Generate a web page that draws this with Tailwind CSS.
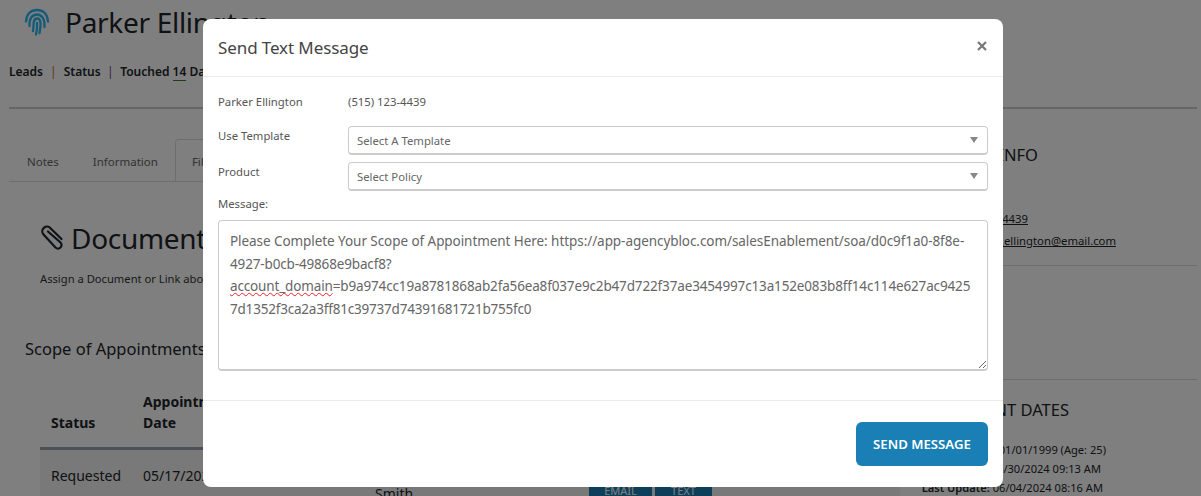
<!DOCTYPE html>
<html lang="en">
<head>
  <meta charset="UTF-8" />
  <meta name="viewport" content="width=device-width, initial-scale=1" />
  <title>Send Text Message</title>
  <script src="https://cdn.jsdelivr.net/npm/@tailwindcss/browser@4"></script>
</head>
<body class="relative h-[496px] overflow-hidden bg-white font-['Noto_Sans',sans-serif] text-[#212529]">
  <!-- Page behind the modal -->
  <div class="pl-[9px] pr-[4px]">
    <header class="h-[107px]">
      <div class="flex items-center gap-[15px] pl-[15px] pt-[4px]">
        <svg class="h-[28px] w-[26px] text-[#28b8f0]" viewBox="0 0 26 28" fill="none" stroke="currentColor" stroke-width="2.300" stroke-linecap="round">
          <path d="M2 13.500C2.500 6 7 2 13 2s10.500 4 11 11.500" />
          <path d="M5.500 18C5 11 8 6.500 13 6.500S21 11 20.500 19" />
          <path d="M9 23C10 17 8.500 10.500 13 10.500S17 17 15.500 25" />
          <path d="M13 15c.3 4 0 8-1 11.500" />
        </svg>
        <h1 class="text-[28px] leading-[36px] tracking-[-0.3px]">Parker Ellington</h1>
      </div>
      <div class="mt-[23px] flex items-center text-[12px] font-semibold leading-[18px]">
        <span>Leads</span>
        <span class="mx-[7px] font-normal text-[#c86a30]">|</span>
        <span>Status</span>
        <span class="mx-[6.500px] font-normal text-[#7a3a8a]">|</span>
        <span>Touched <span class="border-b border-[#3a7a3a]">14</span> Days Ago</span>
      </div>
    </header>
    <div class="h-[2px] bg-[#ccc]"></div>

    <div class="grid grid-cols-[900px_1fr] pt-[31px]">
      <main>
        <nav class="flex h-[42px] items-end border-b border-[#ddd] text-[11.500px] text-[#666]">
          <a class="flex h-[41px] items-center pl-[18px] pr-[16px] pt-[3px]">Notes</a>
          <a class="flex h-[41px] items-center pl-[18px] pr-[17px] pt-[3px]">Information</a>
          <a class="flex h-[42px] items-center rounded-t border border-b-0 border-[#ddd] bg-white px-[16px] pt-[3px]">Files</a>
        </nav>
        <div class="flex items-center gap-[7px] pl-[31px] pt-[38px]">
          <svg class="h-[27px] w-[24px]" viewBox="0 0 24 27" fill="none" stroke="currentColor" stroke-width="2.200" stroke-linecap="round" stroke-linejoin="round">
            <path d="M21.500 14 10.500 3.200A4.700 4.700 0 0 0 3.500 9.500L15.500 22.500a3.500 3.500 0 0 0 5-5L8 6.500" />
          </svg>
          <h2 class="text-[28px] leading-[36px] tracking-[-0.3px]">Documents</h2>
        </div>
        <p class="pl-[31px] pt-[15px] text-[11.200px] leading-[16px] text-[#333]">Assign a Document or Link about this lead</p>
        <h3 class="pl-[16px] pt-[50px] text-[16.500px] leading-[24px]">Scope of Appointments</h3>
        <table class="ml-[31px] mt-[25px] w-[860px] table-fixed border-collapse text-left text-[14px]">
          <thead>
            <tr class="h-[62px] border-b-[3px] border-[#9aa5b1] align-bottom font-semibold">
              <th class="w-[91px] pb-[14px] pl-[11px] pr-[12px]">Status</th>
              <th class="w-[232px] px-[12px] pb-[14px]">Appointment<br />Date</th>
              <th class="w-[214px] px-[12px] pb-[14px]">Agent</th>
              <th class="px-[12px] pb-[14px]">Actions</th>
            </tr>
          </thead>
          <tbody>
            <tr class="h-[60px] bg-[#f2f2f2] align-top">
              <td class="pl-[11px] pr-[12px] pt-[15px]">Requested</td>
              <td class="px-[12px] pt-[15px]">05/17/2024</td>
              <td class="px-[12px] pt-[33px]">Smith</td>
              <td class="px-[12px] pt-[27px]">
                <div class="flex gap-[3px] text-[11px] text-white">
                  <span class="flex h-[30px] w-[63px] items-center justify-center bg-[#1a7fb5]">EMAIL</span>
                  <span class="flex h-[30px] w-[57px] items-center justify-center bg-[#1a7fb5]">TEXT</span>
                </div>
              </td>
            </tr>
          </tbody>
        </table>
      </main>
      <aside class="text-[11.300px]">
        <h3 class="flex w-[129px] justify-end whitespace-nowrap pt-[3px] text-[16.500px] leading-[24px]">CONTACT INFO</h3>
        <p class="flex w-[119px] justify-end whitespace-nowrap pt-[41px] leading-[22px]"><span class="underline">(515) 123-4439</span></p>
        <p class="flex w-[207px] justify-end whitespace-nowrap leading-[22px]"><span class="underline">parker.ellington@email.com</span></p>
        <div class="mt-[13px] border-t border-[#ddd]"></div>
        <div class="mt-[113px] border-t border-[#ddd]"></div>
        <h3 class="flex w-[160px] justify-end whitespace-nowrap pt-[18px] text-[16.500px] leading-[24px]">IMPORTANT DATES</h3>
        <div class="pt-[18px] text-[11.100px] leading-[19px]">
          <p class="flex w-[197px] justify-end whitespace-nowrap"><span><b class="font-semibold">Birthday:</b> 01/01/1999 (Age: 25)</span></p>
          <p class="flex w-[192px] justify-end whitespace-nowrap"><span><b class="font-semibold">Created:</b> 04/30/2024 09:13 AM</span></p>
          <p class="flex w-[194px] justify-end whitespace-nowrap"><span><b class="font-semibold">Last Update:</b> 06/04/2024 08:16 AM</span></p>
        </div>
      </aside>
    </div>
  </div>

  <!-- Overlay -->
  <div class="absolute inset-0 bg-black/50"></div>

  <!-- Modal -->
  <div class="absolute left-[203px] top-[19px] flex h-[468px] w-[800px] flex-col rounded-[8px] bg-white text-[#555]">
    <div class="flex h-[58px] items-center justify-between border-b border-[#e9ecef] pl-[15px] pr-[16px]">
      <h4 class="text-[17px] tracking-[-0.1px] text-[#444]">Send Text Message</h4>
      <svg class="-mt-[4px] h-[10px] w-[10px] text-[#777]" viewBox="0 0 10 10" stroke="currentColor" stroke-width="2.200"><path d="M1 1l8 8M9 1l-8 8" /></svg>
    </div>
    <div class="flex-1 px-[15px] text-[11.300px]">
      <div class="flex h-[49px] items-center pt-[2px]">
        <span class="w-[130px]">Parker Ellington</span>
        <span>(515) 123-4439</span>
      </div>
      <div class="flex h-[36px] items-start">
        <span class="w-[130px] leading-[20px]">Use Template</span>
        <div class="flex h-[29px] flex-1 items-center justify-between rounded-[4px] border border-b-2 border-[#ccc] pl-[8px] pr-[9px] text-[#666]">
          <span class="pt-[2px]">Select A Template</span>
          <span class="h-0 w-0 border-x-[4.500px] border-t-[6px] border-x-transparent border-t-[#888]"></span>
        </div>
      </div>
      <div class="flex h-[36px] items-start">
        <span class="w-[130px] leading-[20px]">Product</span>
        <div class="flex h-[29px] flex-1 items-center justify-between rounded-[4px] border border-b-2 border-[#ccc] pl-[8px] pr-[9px] text-[#666]">
          <span class="pt-[2px]">Select Policy</span>
          <span class="h-0 w-0 border-x-[4.500px] border-t-[6px] border-x-transparent border-t-[#888]"></span>
        </div>
      </div>
      <label class="block h-[22px] leading-[12px]">Message:</label>
      <div class="h-[151px] resize overflow-auto whitespace-nowrap rounded-[4px] border border-b-2 border-[#ccc] px-[11px] py-[9px] text-[13.500px] leading-[22.700px] text-[#666]">
        <div class="tracking-[-0.065px]">Please Complete Your Scope of Appointment Here: https://app-agencybloc.com/salesEnablement/soa/d0c9f1a0-8f8e-</div>
        <div class="tracking-[-0.15px]">4927-b0cb-49868e9bacf8?</div>
        <div class="tracking-[-0.145px]"><span class="underline decoration-[#e8202a] decoration-wavy decoration-1">account_domain</span>=b9a974cc19a8781868ab2fa56ea8f037e9c2b47d722f37ae3454997c13a152e083b8ff14c114e627ac9425</div>
        <div class="tracking-[-0.2px]">7d1352f3ca2a3ff81c39737d74391681721b755fc0</div>
      </div>
    </div>
    <div class="flex h-[87px] items-center justify-end border-t border-[#e9ecef] pr-[15px]">
      <button class="h-[44px] w-[132px] rounded-[6px] bg-[#1a7fb5] pt-[2px] text-[13.200px] font-semibold text-white">SEND MESSAGE</button>
    </div>
  </div>
</body>
</html>
